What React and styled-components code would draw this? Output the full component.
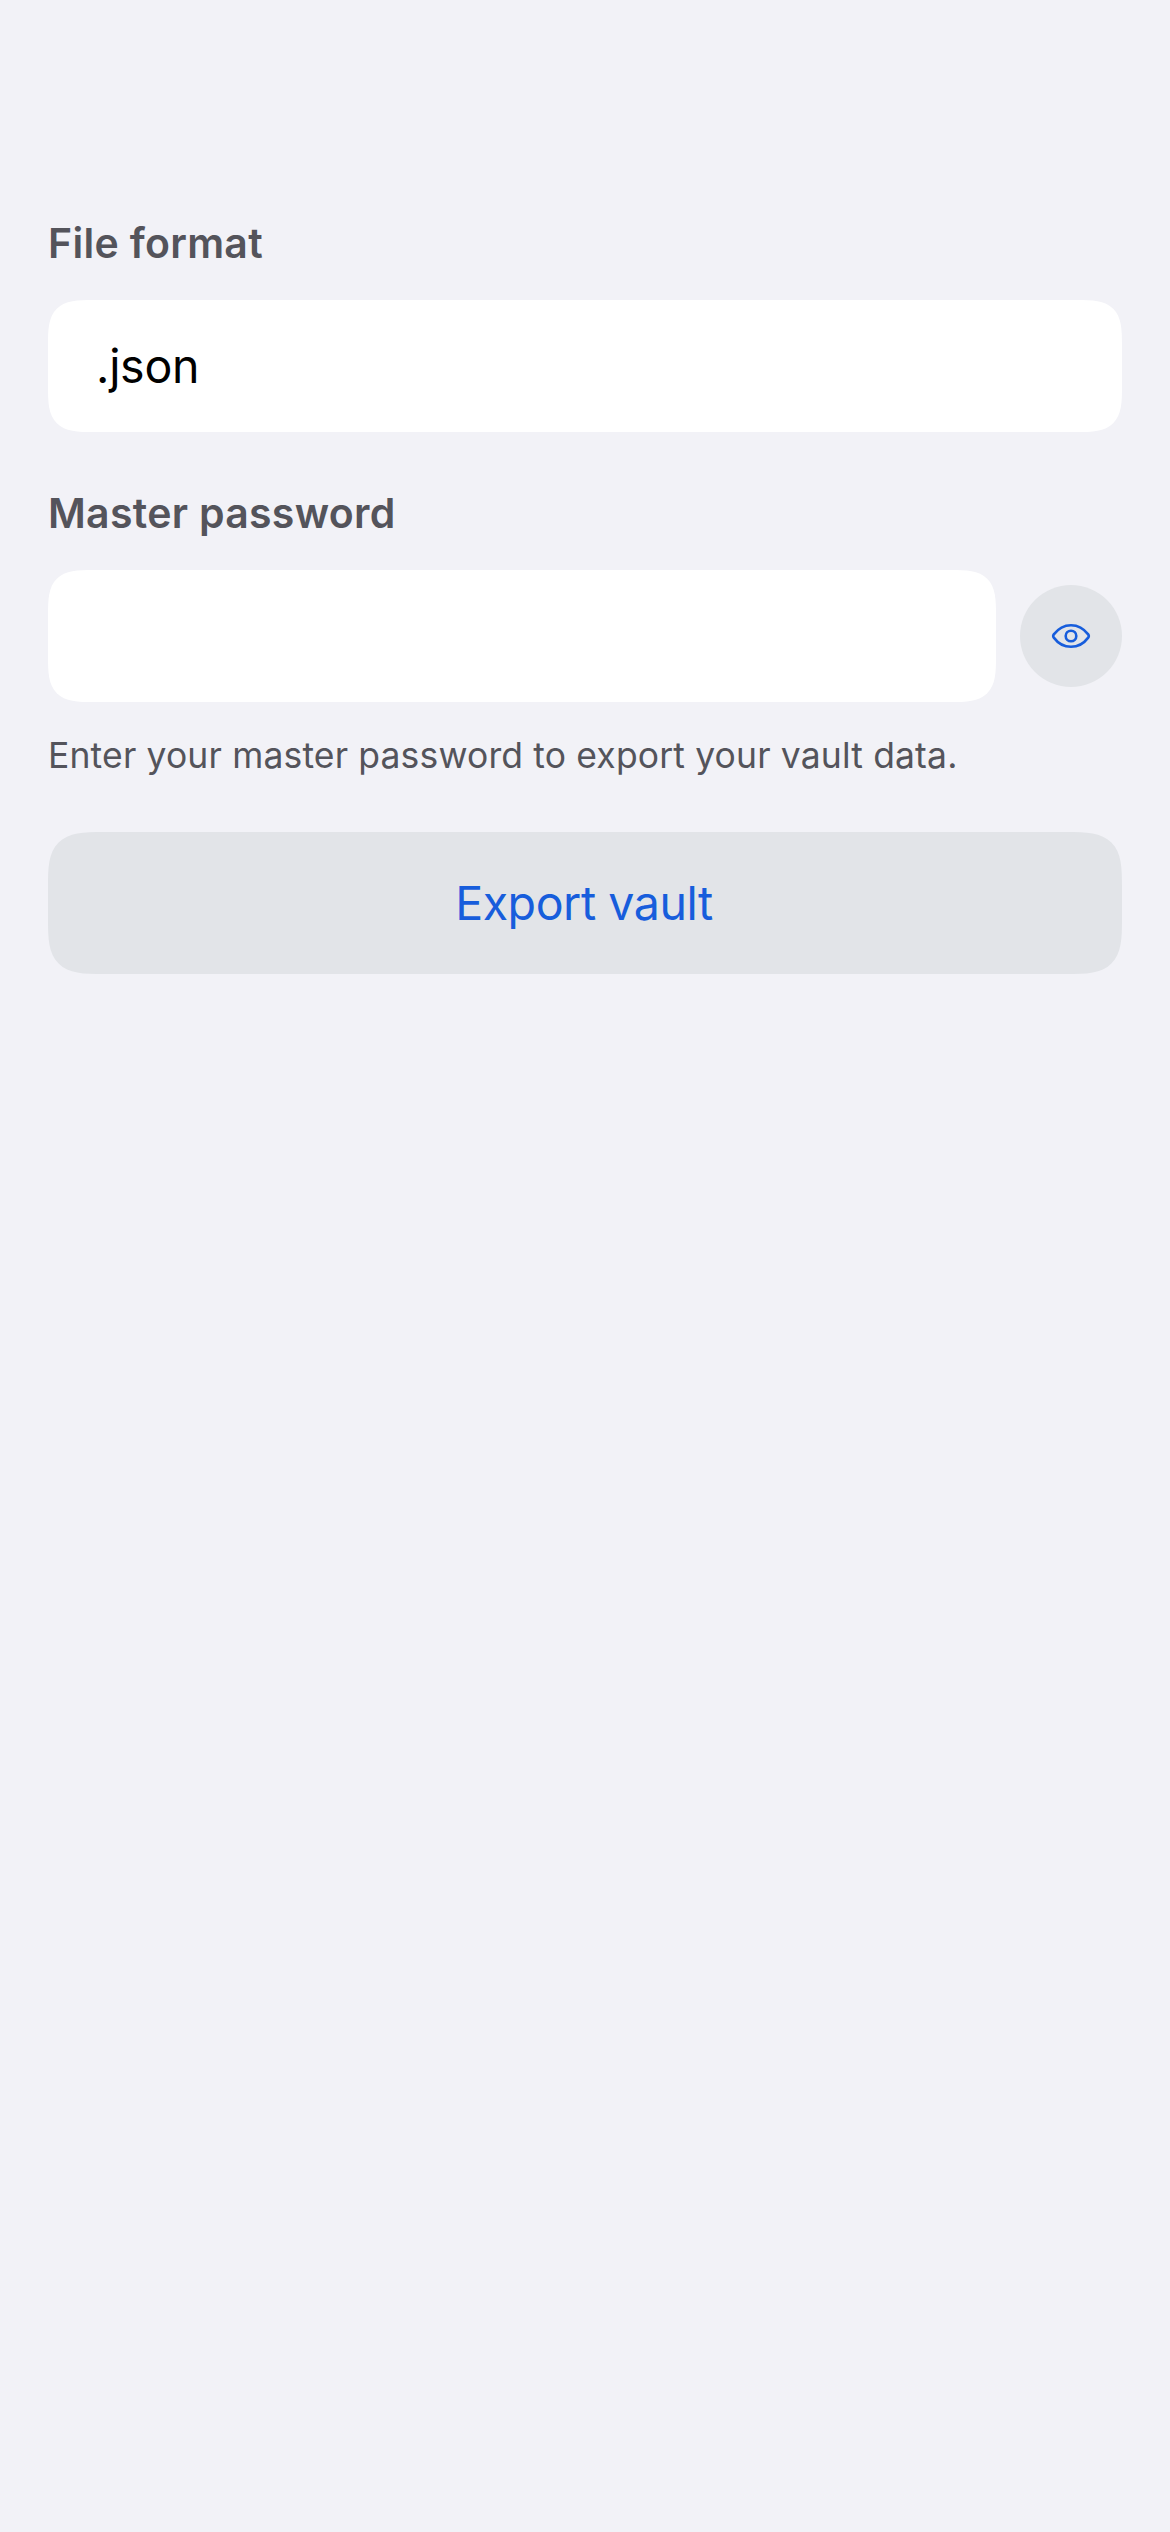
import React, { useState } from "react";
import styled, { createGlobalStyle, css } from "styled-components";

const GlobalStyle = createGlobalStyle`
  *, *::before, *::after { box-sizing: border-box; }
  html { background: #f2f2f7; }
  body {
    margin: 0;
    background: #f2f2f7;
    font-family: Inter, "Liberation Sans", sans-serif;
    -webkit-font-smoothing: antialiased;
  }
  button, input { font: inherit; border: 0; margin: 0; outline: none; }
`;

/* Continuous corners where the browser has them, plain round ones elsewhere. */
const continuousCorners = (radius) => css`
  border-radius: ${radius}px;
  @supports (corner-shape: superellipse(1.7)) {
    border-radius: ${radius * 1.53}px;
    corner-shape: superellipse(1.7);
  }
`;

const Screen = styled.main`
  display: flex;
  flex-direction: column;
  min-height: 2532px;
  padding: 216px 48px 0;
`;

const Field = styled.section`
  display: flex;
  flex-direction: column;
  margin-bottom: ${(p) => p.$after}px;
`;

const Label = styled.label`
  height: 54px;
  margin-bottom: 30px;
  font-size: 41px;
  font-weight: 600;
  line-height: 54px;
  letter-spacing: 0.3px;
  white-space: nowrap;
  color: #54545b;
`;

const Row = styled.div`
  display: flex;
  align-items: center;
  gap: 24px;
`;

const TextBox = styled.input`
  flex: 1;
  min-width: 0;
  height: 132px;
  padding: 0 48px;
  background: #fff;
  color: #000;
  font-size: 46.5px;
  ${continuousCorners(30)}
`;

const FormatPicker = styled.button`
  height: 132px;
  padding: 0 48px;
  background: #fff;
  color: #000;
  font-size: 46.5px;
  letter-spacing: -0.27px;
  text-align: left;
  ${continuousCorners(30)}
`;

const RoundButton = styled.button`
  display: flex;
  align-items: center;
  justify-content: center;
  width: 102px;
  height: 102px;
  padding: 0;
  border-radius: 50%;
  background: #e2e4e8;
  color: #175ddc;
`;

const Hint = styled.p`
  margin: 25px 0 0;
  line-height: 58px;
  font-size: 35.5px;
  letter-spacing: 0.15px;
  white-space: nowrap;
  color: #54545b;
`;

const ExportButton = styled.button`
  height: 142px;
  padding: 0 2px 0 0;
  background: #e2e4e8;
  color: #175ddc;
  font-size: 46.5px;
  letter-spacing: -0.43px;
  ${continuousCorners(36)}
`;

function EyeIcon() {
  return (
    <svg width="40" height="28" viewBox="0 0 40 28" fill="none" stroke="currentColor" strokeWidth="2.6">
      <path
        strokeLinejoin="round"
        d="M2.8 12.4C6.6 7.3 12.6 3.2 20 3.2S33.4 7.3 37.2 12.4Q38.4 14 37.2 15.6C33.4 20.7 27.4 24.8 20 24.8S6.6 20.7 2.8 15.6Q1.6 14 2.8 12.4Z"
      />
      <circle cx="20" cy="14" r="5.3" />
    </svg>
  );
}

export default function App() {
  const [visible, setVisible] = useState(false);
  return (
    <>
      <GlobalStyle />
      <Screen>
        <Field $after={54}>
          <Label htmlFor="format">File format</Label>
          <FormatPicker id="format" type="button">.json</FormatPicker>
        </Field>
        <Field $after={47}>
          <Label htmlFor="password">Master password</Label>
          <Row>
            <TextBox id="password" type={visible ? "text" : "password"} />
            <RoundButton type="button" onClick={() => setVisible(!visible)}>
              <EyeIcon />
            </RoundButton>
          </Row>
          <Hint>Enter your master password to export your vault data.</Hint>
        </Field>
        <ExportButton type="button">Export vault</ExportButton>
      </Screen>
    </>
  );
}
